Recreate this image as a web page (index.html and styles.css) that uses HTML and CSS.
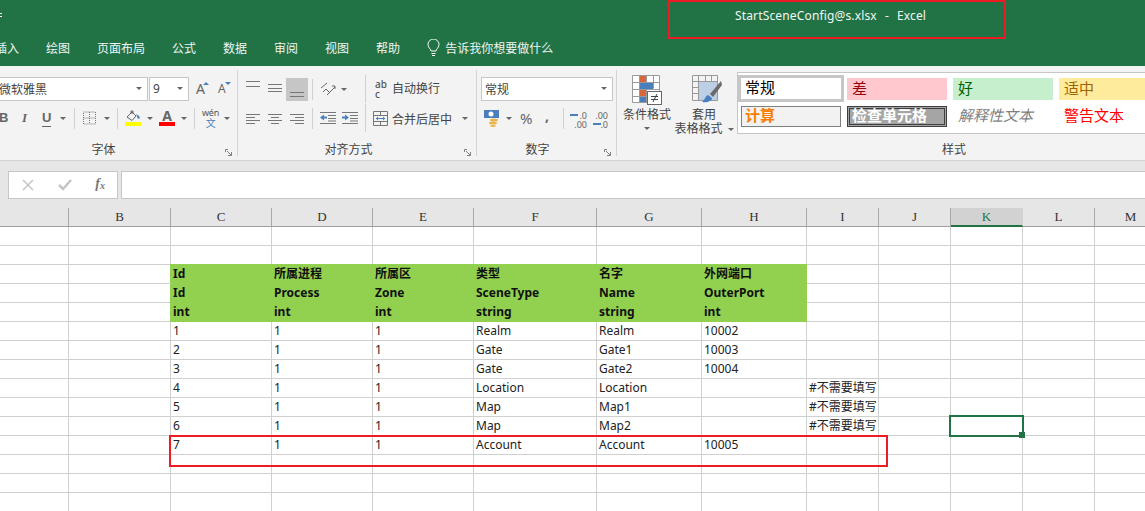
FILE: index.html
```html
<!DOCTYPE html>
<html lang="zh-CN">
<head>
  <meta charset="UTF-8">
  <title>StartSceneConfig@s.xlsx - Excel</title>
  <link rel="stylesheet" href="styles.css">
</head>
<body>
<div class="window">
  <header class="titlebar">
    <div class="title-row">
      <span class="qat-mark"></span>
      <span class="title">StartSceneConfig@s.xlsx &nbsp;-&nbsp; Excel</span>
    </div>
    <nav class="tabs">
      <span class="tab-cut">插入</span>
      <span>绘图</span>
      <span>页面布局</span>
      <span>公式</span>
      <span>数据</span>
      <span>审阅</span>
      <span>视图</span>
      <span>帮助</span>
      <span class="tell">
        <svg width="13" height="18" viewBox="0 0 13 18" fill="none" stroke="#fff"><path d="M4 12c0-2-3-3-3-6.500a5.500 5.500 0 0 1 11 0c0 3.500-3 4.500-3 6.500z"/><path d="M4.500 14.500h4M5 16.500h3"/></svg>
        告诉我你想要做什么
      </span>
    </nav>
  </header>

  <section class="ribbon">
    <div class="group font-group">
      <div class="row">
        <div class="combo font-combo">微软雅黑<i class="caret"></i></div>
        <div class="combo size-combo ml-1">9<i class="caret"></i></div>
        <span class="grow-a ml-7">A<b class="tick up"></b></span>
        <span class="shrink-a ml-9">A<b class="tick down"></b></span>
      </div>
      <div class="row row-two">
        <span class="letter bold-b">B</span>
        <span class="letter italic-i ml-15">I</span>
        <span class="letter under-u ml-14">U</span>
        <i class="caret ml-9"></i>
        <i class="sep ml-8"></i>
        <svg class="ml-8" width="13" height="14" viewBox="0 0 13 14" fill="none" stroke="#777" stroke-dasharray="1 1"><path d="M.5 1h12v12H.5zM6.500 1v12M.5 7h12"/></svg>
        <i class="caret ml-8"></i>
        <i class="sep ml-7"></i>
        <span class="swatch-icon ml-7">
          <svg width="16" height="12" viewBox="0 0 16 12" fill="none"><path d="M2 7l5-5 4 4-4 4.500z" stroke="#666"/><path d="M6 4V1h2v3" stroke="#666"/><path d="M11 4l3 2 1 2-2 1z" fill="#4a7fbd"/></svg>
          <b class="swatch yellow"></b>
        </span>
        <i class="caret ml-6"></i>
        <span class="swatch-icon ml-6">
          <span class="font-a">A</span>
          <b class="swatch red"></b>
        </span>
        <i class="caret ml-6"></i>
        <i class="sep ml-7"></i>
        <span class="wen ml-8">wén<em>文</em></span>
        <i class="caret ml-6"></i>
      </div>
      <div class="group-label">字体</div>
      <svg class="launcher" width="7" height="7" viewBox="0 0 7 7" fill="none" stroke="#808080"><path d="M.5 3V.5H3M2 2l4 4M6.500 3v3.500H3"/></svg>
    </div>

    <div class="group align-group">
      <div class="row">
        <svg width="14" height="24" viewBox="0 0 14 24" stroke="#777"><path d="M0 4.500h14M0 9.500h14"/></svg>
        <svg class="ml-8" width="14" height="24" viewBox="0 0 14 24" stroke="#777"><path d="M0 7.500h14M0 11.500h14M0 14.500h14"/></svg>
        <span class="pressed ml-4"><svg width="14" height="23" viewBox="0 0 14 23" stroke="#777"><path d="M0 14.500h14M0 18.500h14"/></svg></span>
        <i class="sep ml-4"></i>
        <svg class="ml-7" width="16" height="18" viewBox="0 0 16 18" fill="none" stroke="#666"><path d="M1 8l6-5M3 12l3-3 3 3M7 15l8-8"/><path d="M12 6h3v3"/></svg>
        <i class="caret ml-5"></i>
        <i class="sep wide-sep ml-18"></i>
        <span class="abc ml-9">ab<br>c</span>
        <span class="tool-text ml-4">自动换行</span>
      </div>
      <div class="row row-two">
        <svg width="14" height="14" viewBox="0 0 14 14" stroke="#777"><path d="M0 3.500h14M0 6.500h9M0 9.500h14M0 12.500h9"/></svg>
        <svg class="ml-8" width="14" height="14" viewBox="0 0 14 14" stroke="#777"><path d="M0 3.500h14M3 6.500h8M0 9.500h14M3 12.500h8"/></svg>
        <svg class="ml-8" width="14" height="14" viewBox="0 0 14 14" stroke="#777"><path d="M0 3.500h14M5 6.500h9M0 9.500h14M5 12.500h9"/></svg>
        <i class="sep ml-8"></i>
        <svg class="ml-7" width="16" height="14" viewBox="0 0 16 14" fill="none"><path d="M0 1.500h16M8 4.500h8M8 7.500h8M0 12.500h16M8 10h8" stroke="#777"/><path d="M0 6.500l4-3v2h3v2H4v2z" fill="#4a7fbd"/></svg>
        <svg class="ml-6" width="16" height="14" viewBox="0 0 16 14" fill="none"><path d="M0 1.500h16M8 4.500h8M8 7.500h8M0 12.500h16M8 10h8" stroke="#777"/><path d="M7 6.500l-4-3v2H0v2h3v2z" fill="#4a7fbd"/></svg>
        <i class="sep wide-sep ml-7"></i>
        <svg class="ml-7" width="15" height="15" viewBox="0 0 15 15" fill="none"><path d="M.5.500h14v14H.5zM.5 4.500h14M.5 10.500h14M7.500.500v4M7.500 10.500v4" stroke="#777"/><path d="M3 7.500h9" stroke="#4a7fbd"/><path d="M3 7.500l2-2v4zM12 7.500l-2-2v4z" fill="#4a7fbd"/></svg>
        <span class="tool-text ml-4">合并后居中</span>
        <i class="caret ml-10"></i>
      </div>
      <div class="group-label">对齐方式</div>
      <svg class="launcher" width="7" height="7" viewBox="0 0 7 7" fill="none" stroke="#808080"><path d="M.5 3V.5H3M2 2l4 4M6.500 3v3.500H3"/></svg>
    </div>

    <div class="group number-group">
      <div class="row">
        <div class="combo number-combo ml-4">常规<i class="caret"></i></div>
      </div>
      <div class="row row-two">
        <svg class="ml-7" width="16" height="18" viewBox="0 0 16 18" fill="none"><rect x="0" y="1" width="15" height="8" fill="#4a7fbd"/><circle cx="7" cy="5" r="2.500" fill="#fff"/><ellipse cx="10" cy="11" rx="4" ry="1.500" fill="#e8b64c"/><ellipse cx="9" cy="14" rx="4" ry="1.500" fill="#e8b64c"/><ellipse cx="9" cy="17" rx="3" ry="1" fill="#e8b64c"/></svg>
        <i class="caret ml-6"></i>
        <span class="percent ml-8">%</span>
        <span class="comma ml-12">,</span>
        <i class="sep ml-13"></i>
        <span class="decimal ml-6"><em class="arrow-left"></em>.0<br>.00</span>
        <span class="decimal ml-6">.00<br><em class="arrow-right"></em>.0</span>
      </div>
      <div class="group-label">数字</div>
      <svg class="launcher" width="7" height="7" viewBox="0 0 7 7" fill="none" stroke="#808080"><path d="M.5 3V.5H3M2 2l4 4M6.500 3v3.500H3"/></svg>
    </div>

    <div class="group styles-group">
      <div class="styles-body">
        <div class="big-button cond-button">
          <svg width="30" height="30" viewBox="0 0 30 30"><path d="M.5.500h27v27H.5zM.5 7.500h27M.5 14.500h27M.5 21.500h14M7.500.500v27M14.500.500v27M21.500.500v13" fill="#fff" stroke="#9a9a9a"/><rect x="8" y="1" width="6" height="6" fill="#d9663a"/><rect x="8" y="8" width="13" height="6" fill="#4a7fbd"/><rect x="8" y="15" width="6" height="6" fill="#d9663a"/><rect x="8" y="22" width="6" height="5" fill="#4a7fbd"/><rect x="15.500" y="16.500" width="14" height="13" fill="#fff" stroke="#666"/><path d="M19 21.500h7M19 24.500h7M25 19l-4 8" stroke="#444" fill="none"/></svg>
          <span class="big-text">条件格式</span>
          <i class="caret"></i>
        </div>
        <div class="big-button table-button">
          <svg width="30" height="30" viewBox="0 0 30 30" fill="none"><path d="M.5.500h25v25H.5zM.5 6.500h25M.5 12.500h25M.5 18.500h25M6.500.500v25M13.500.500v25M19.500.500v25" stroke="#999"/><rect x="7" y="7" width="18" height="18" fill="#bccfe6"/><path d="M29 6l-11 13 3 3L30 10z" fill="#6a6a6a"/><path d="M16 20c-3 1-3 5-6 7 5 1 10-1 10-4z" fill="#4a7fbd"/></svg>
          <span class="big-text">套用</span>
          <span class="big-text">表格格式<i class="caret ml-5"></i></span>
        </div>
        <div class="gallery">
          <span class="style-cell normal">常规</span>
          <span class="style-cell bad">差</span>
          <span class="style-cell good">好</span>
          <span class="style-cell neutral">适中</span>
          <span class="style-cell calc">计算</span>
          <span class="style-cell check">检查单元格</span>
          <span class="style-cell explain">解释性文本</span>
          <span class="style-cell warn">警告文本</span>
        </div>
      </div>
      <div class="group-label">样式</div>
    </div>
  </section>

  <section class="formula-bar">
    <div class="formula-buttons">
      <svg width="12" height="12" viewBox="0 0 12 12" stroke="#c4c4c4" stroke-width="1.500"><path d="M1 1l10 10M11 1L1 11"/></svg>
      <svg width="14" height="12" viewBox="0 0 14 12" fill="none" stroke="#c4c4c4" stroke-width="2.500"><path d="M1 6l4 4 8-9"/></svg>
      <span class="fx">f<sub>x</sub></span>
    </div>
    <div class="formula-input"></div>
  </section>

  <table class="sheet">
    <colgroup>
      <col class="w-69"><col class="w-102"><col class="w-101"><col class="w-101"><col class="w-101">
      <col class="w-123"><col class="w-105"><col class="w-105"><col class="w-72"><col class="w-72">
      <col class="w-72"><col class="w-72"><col class="w-72">
    </colgroup>
    <thead>
      <tr><th></th><th>B</th><th>C</th><th>D</th><th>E</th><th>F</th><th>G</th><th>H</th><th>I</th><th>J</th><th class="active">K</th><th>L</th><th>M</th></tr>
    </thead>
    <tbody>
      <tr><td></td><td></td><td></td><td></td><td></td><td></td><td></td><td></td><td></td><td></td><td></td><td></td><td></td></tr>
      <tr><td></td><td></td><td></td><td></td><td></td><td></td><td></td><td></td><td></td><td></td><td></td><td></td><td></td></tr>
      <tr class="head-row"><td></td><td></td><td class="hd">Id</td><td class="hd">所属进程</td><td class="hd">所属区</td><td class="hd">类型</td><td class="hd">名字</td><td class="hd">外网端口</td><td></td><td></td><td></td><td></td><td></td></tr>
      <tr><td></td><td></td><td class="hd">Id</td><td class="hd">Process</td><td class="hd">Zone</td><td class="hd">SceneType</td><td class="hd">Name</td><td class="hd">OuterPort</td><td></td><td></td><td></td><td></td><td></td></tr>
      <tr><td></td><td></td><td class="hd">int</td><td class="hd">int</td><td class="hd">int</td><td class="hd">string</td><td class="hd">string</td><td class="hd">int</td><td></td><td></td><td></td><td></td><td></td></tr>
      <tr><td></td><td></td><td>1</td><td>1</td><td>1</td><td>Realm</td><td>Realm</td><td>10002</td><td></td><td></td><td></td><td></td><td></td></tr>
      <tr><td></td><td></td><td>2</td><td>1</td><td>1</td><td>Gate</td><td>Gate1</td><td>10003</td><td></td><td></td><td></td><td></td><td></td></tr>
      <tr><td></td><td></td><td>3</td><td>1</td><td>1</td><td>Gate</td><td>Gate2</td><td>10004</td><td></td><td></td><td></td><td></td><td></td></tr>
      <tr><td></td><td></td><td>4</td><td>1</td><td>1</td><td>Location</td><td>Location</td><td></td><td>#不需要填写</td><td></td><td></td><td></td><td></td></tr>
      <tr><td></td><td></td><td>5</td><td>1</td><td>1</td><td>Map</td><td>Map1</td><td></td><td>#不需要填写</td><td></td><td></td><td></td><td></td></tr>
      <tr><td></td><td></td><td>6</td><td>1</td><td>1</td><td>Map</td><td>Map2</td><td></td><td>#不需要填写</td><td></td><td></td><td></td><td></td></tr>
      <tr><td></td><td></td><td>7</td><td>1</td><td>1</td><td>Account</td><td>Account</td><td>10005</td><td></td><td></td><td></td><td></td><td></td></tr>
      <tr><td></td><td></td><td></td><td></td><td></td><td></td><td></td><td></td><td></td><td></td><td></td><td></td><td></td></tr>
      <tr><td></td><td></td><td></td><td></td><td></td><td></td><td></td><td></td><td></td><td></td><td></td><td></td><td></td></tr>
      <tr><td></td><td></td><td></td><td></td><td></td><td></td><td></td><td></td><td></td><td></td><td></td><td></td><td></td></tr>
    </tbody>
  </table>

  <div class="note-box title-note"></div>
  <div class="note-box row-note"></div>
  <div class="selected-cell"><i class="fill-handle"></i></div>
</div>
</body>
</html>
```

FILE: styles.css
```css
* {
  box-sizing: border-box;
}
html, body {
  margin: 0;
  padding: 0;
  background-color: #fff;
}
.window {
  position: relative;
  width: 1145px;
  height: 511px;
  overflow: hidden;
  font-family: "Noto Sans", "Noto Sans CJK SC", sans-serif;
  font-size: 12px;
  color: #444;
}
i, em {
  font-style: normal;
}

/* spacing helpers for the ribbon rows */
.ml-1 { margin-left: 1px; }
.ml-4 { margin-left: 4px; }
.ml-5 { margin-left: 5px; }
.ml-6 { margin-left: 6px; }
.ml-7 { margin-left: 7px; }
.ml-8 { margin-left: 8px; }
.ml-9 { margin-left: 9px; }
.ml-10 { margin-left: 10px; }
.ml-12 { margin-left: 12px; }
.ml-13 { margin-left: 13px; }
.ml-14 { margin-left: 14px; }
.ml-15 { margin-left: 15px; }
.ml-18 { margin-left: 18px; }

/* title bar */
.titlebar {
  height: 66px;
  background-color: #217346;
  color: #fff;
}
.title-row {
  display: flex;
  align-items: center;
  height: 30px;
}
.qat-mark {
  width: 2px;
  height: 4px;
  border-top: 1px solid #fff;
  border-bottom: 1px solid #fff;
}
.title {
  margin-left: 733px;
  letter-spacing: 0.15px;
  word-spacing: 0.75px;
  white-space: nowrap;
  color: #f2f7f4;
}
.tabs {
  display: flex;
  align-items: center;
  gap: 27px;
  height: 36px;
  color: #f0f5f2;
}
.tab-cut {
  margin-left: -5px;
}
.tell {
  display: flex;
  align-items: center;
  gap: 5px;
}

/* ribbon */
.ribbon {
  display: flex;
  height: 95px;
  background-color: #f3f3f3;
  border-bottom: 1px solid #d2d2d2;
}
.group {
  position: relative;
  flex: none;
  height: 86px;
  margin-top: 4px;
  padding-top: 7px;
  border-right: 1px solid #d4d4d4;
}
.font-group { width: 238px; }
.align-group { width: 239px; padding-left: 8px; }
.number-group { width: 140px; }
.styles-group {
  width: 674px;
  padding-top: 2px;
  border-right: 0;
}
.row {
  display: flex;
  align-items: center;
  height: 24px;
}
.row-two {
  height: 26px;
  margin-top: 4px;
}
.group-label {
  position: absolute;
  left: 0;
  right: 0;
  bottom: -2px;
  line-height: 16px;
  text-align: center;
  color: #444;
}
.font-group .group-label { right: 30px; }
.align-group .group-label { right: 17px; }
.number-group .group-label { right: 18px; }
.launcher {
  position: absolute;
  right: 5px;
  bottom: 0;
}
.caret {
  display: inline-block;
  flex: none;
  width: 0;
  height: 0;
  border-left: 3px solid transparent;
  border-right: 3px solid transparent;
  border-top: 3px solid #666;
}
.sep {
  display: block;
  flex: none;
  width: 1px;
  height: 21px;
  background-color: #d0d0d0;
}
.wide-sep {
  height: 28px;
}
.row svg {
  flex: none;
}
.combo {
  display: flex;
  flex: none;
  align-items: center;
  justify-content: space-between;
  height: 24px;
  padding: 0 5px 1px 3px;
  background-color: #fff;
  border: 1px solid #c6c6c6;
}
.font-combo {
  width: 152px;
  margin-left: -4px;
  padding-left: 2px;
}
.size-combo {
  width: 40px;
}
.number-combo {
  width: 132px;
}
.grow-a, .shrink-a {
  position: relative;
  flex: none;
  width: 10px;
  font-size: 14px;
  color: #666;
  line-height: 18px;
}
.shrink-a {
  font-size: 12px;
}
.grow-a {
  margin-right: 3px;
}
.tick {
  position: absolute;
  right: -3px;
  top: 2px;
  width: 0;
  height: 0;
  border-left: 3px solid transparent;
  border-right: 3px solid transparent;
}
.tick.up { border-bottom: 3px solid #4a7fbd; }
.tick.down { border-top: 3px solid #4a7fbd; }
.letter {
  display: block;
  flex: none;
  font-family: "Liberation Sans", sans-serif;
  font-size: 13px;
  line-height: 16px;
  color: #666;
}
.bold-b {
  width: 7px;
  margin-left: -1px;
  font-weight: bold;
}
.italic-i {
  width: 7px;
  font-family: "Liberation Serif", serif;
  font-style: italic;
  font-weight: bold;
  text-align: center;
}
.under-u {
  width: 9px;
  font-weight: bold;
  border-bottom: 1px solid #666;
}
.swatch-icon {
  display: flex;
  flex: none;
  flex-direction: column;
  width: 16px;
}
.swatch {
  display: block;
  height: 4px;
}
.swatch.yellow { background-color: #ffff00; }
.swatch.red { background-color: #ff0000; }
.font-a {
  height: 12px;
  font-size: 14px;
  font-weight: bold;
  line-height: 12px;
  text-align: center;
  color: #666;
}
.wen {
  display: flex;
  flex: none;
  flex-direction: column;
  align-items: center;
  width: 15px;
  font-size: 9px;
  line-height: 9px;
  color: #555;
  letter-spacing: -0.3px;
}
.wen em {
  margin-top: 1px;
  font-size: 10px;
  line-height: 10px;
  color: #4a7fbd;
}
.pressed {
  display: flex;
  flex: none;
  align-items: center;
  justify-content: center;
  width: 22px;
  height: 23px;
  background-color: #c6c6c6;
}
.abc {
  flex: none;
  width: 13px;
  font-size: 10px;
  line-height: 10px;
  font-weight: 500;
  color: #555;
}
.tool-text {
  flex: none;
  margin-bottom: 2px;
  white-space: nowrap;
  color: #444;
}
.row-two .tool-text {
  margin: 2px 0 0 4px;
}
.percent {
  flex: none;
  width: 13px;
  font-size: 15px;
  color: #666;
}
.comma {
  flex: none;
  width: 5px;
  margin-top: -5px;
  font-size: 14px;
  font-weight: bold;
  line-height: 14px;
  color: #666;
}
.decimal {
  position: relative;
  flex: none;
  width: 17px;
  margin-top: 3px;
  font-size: 9px;
  line-height: 9px;
  text-align: right;
  color: #666;
}
.decimal + .decimal {
  width: 15px;
}
.arrow-left, .arrow-right {
  position: absolute;
  left: 0;
  width: 8px;
  height: 2px;
  background-color: #4a7fbd;
}
.arrow-left { top: 3px; }
.arrow-right { top: 12px; }

.styles-body {
  display: flex;
  align-items: flex-start;
}
.big-button {
  display: flex;
  flex: none;
  flex-direction: column;
  align-items: center;
  padding-top: 3px;
}
.cond-button {
  width: 48px;
  margin-left: 6px;
}
.table-button {
  width: 58px;
  margin-left: 4px;
}
.big-button svg {
  margin-bottom: 3px;
}
.table-button svg {
  margin-left: 6px;
}
.big-text {
  display: flex;
  align-items: center;
  height: 14px;
  line-height: 14px;
  white-space: nowrap;
}
.cond-button .caret {
  margin-top: 5px;
}
.gallery {
  display: grid;
  grid-template-columns: 109px 106px 106px 106px;
  grid-template-rows: 31px 28px;
  flex: none;
  width: 420px;
  height: 62px;
  margin-left: 4px;
  background-color: #fff;
  border: 1px solid #c6c6c6;
  font-size: 15px;
}
.style-cell {
  display: flex;
  align-items: center;
  width: 100px;
  height: 22px;
  margin-top: 5px;
  padding: 0 0 2px 5px;
  line-height: 1;
  white-space: nowrap;
}
.normal {
  width: 106px;
  height: 27px;
  margin-top: 2px;
  padding-left: 4px;
  border: 3px solid #c6c6c6;
  color: #000;
}
.bad { background-color: #ffc7ce; color: #9c0006; }
.good { background-color: #c6efce; color: #006100; }
.neutral { background-color: #ffeb9c; color: #9c6500; }
.calc {
  height: 21px;
  margin: 2px 0 0 3px;
  padding-left: 3px;
  background-color: #f2f2f2;
  border: 1px solid #7f7f7f;
  color: #fa7d00;
  font-weight: bold;
}
.check {
  height: 21px;
  margin-top: 2px;
  padding-left: 2px;
  background-color: #a5a5a5;
  border: 3px double #3f3f3f;
  color: #fff;
  font-weight: bold;
}
.explain {
  height: 21px;
  margin-top: 2px;
  padding-left: 5px;
  font-style: italic;
  color: #7f7f7f;
}
.warn {
  height: 21px;
  margin-top: 2px;
  padding-left: 5px;
  color: #ff0000;
}

/* formula bar */
.formula-bar {
  display: flex;
  gap: 3px;
  height: 47px;
  padding: 10px 0 0 8px;
  background-color: #e6e6e6;
}
.formula-buttons {
  display: flex;
  align-items: center;
  justify-content: space-between;
  width: 110px;
  height: 28px;
  padding: 0 12px 0 13px;
  background-color: #fff;
  border: 1px solid #c6c6c6;
}
.fx {
  font-family: "Liberation Serif", serif;
  font-size: 14px;
  font-style: italic;
  font-weight: bold;
  line-height: 14px;
  color: #777;
}
.fx sub {
  font-size: 10px;
  vertical-align: -1px;
}
.formula-input {
  flex: 1;
  height: 28px;
  background-color: #fff;
  border: 1px solid #c6c6c6;
  border-right: 0;
}

/* worksheet */
.sheet {
  table-layout: fixed;
  width: 1166px;
  border-collapse: separate;
  border-spacing: 0;
  color: #222;
}
.w-69 { width: 69px; }
.w-72 { width: 72px; }
.w-101 { width: 101px; }
.w-102 { width: 102px; }
.w-105 { width: 105px; }
.w-123 { width: 123px; }
.sheet th {
  height: 19px;
  padding: 0;
  background-color: #e6e6e6;
  border-right: 1px solid #a8a8a8;
  border-bottom: 1px solid #9f9f9f;
  font-family: "Liberation Serif", serif;
  font-size: 13px;
  font-weight: normal;
  line-height: 18px;
  color: #333;
}
.sheet th.active {
  background-color: #d2d2d2;
  border-right-color: #d2d2d2;
  border-bottom: 2px solid #217346;
  line-height: 17px;
  color: #217346;
}
.sheet td {
  height: 19px;
  padding: 0 0 1px 2px;
  border-right: 1px solid #d0d0d0;
  border-bottom: 1px solid #d0d0d0;
  line-height: 17px;
  white-space: nowrap;
  overflow: visible;
}
.sheet td.hd {
  background-color: #92d050;
  border-color: #92d050;
  box-shadow: -1px 0 0 #92d050;
  font-weight: bold;
  color: #111;
}
.head-row td.hd {
  box-shadow: -1px -1px 0 #92d050, 0 -1px 0 #92d050;
}

/* things lying over the sheet */
.note-box {
  position: absolute;
  border: 2px solid #ed1c24;
}
.title-note {
  left: 668px;
  top: 0;
  width: 338px;
  height: 39px;
}
.row-note {
  left: 169px;
  top: 435px;
  width: 719px;
  height: 32px;
}
.selected-cell {
  position: absolute;
  left: 949px;
  top: 415px;
  width: 75px;
  height: 22px;
  border: 2px solid #217346;
}
.fill-handle {
  position: absolute;
  right: -3px;
  bottom: -3px;
  width: 6px;
  height: 6px;
  background-color: #217346;
}
```
